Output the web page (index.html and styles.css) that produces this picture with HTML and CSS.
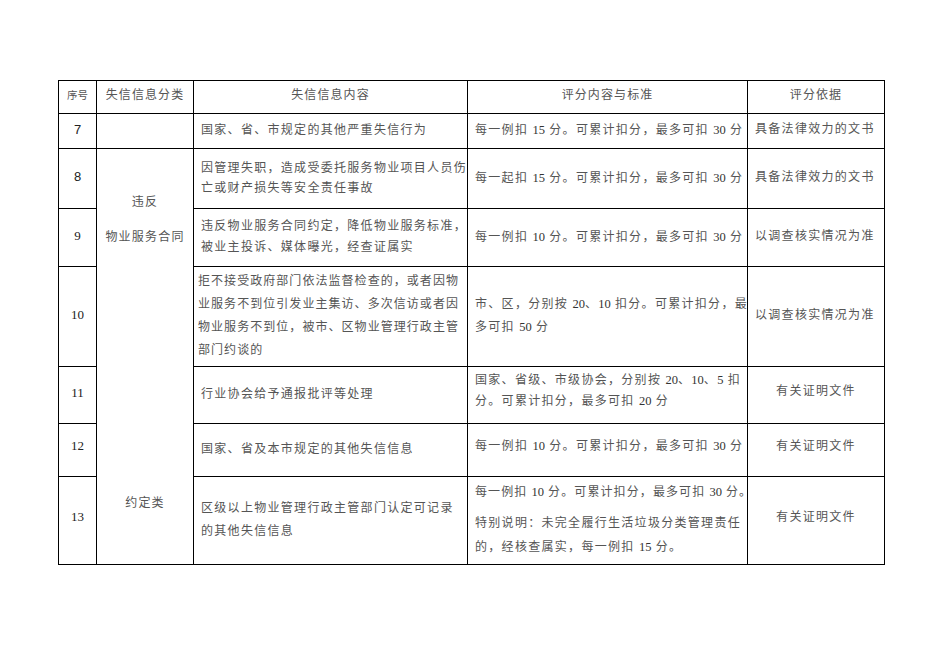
FILE: index.html
```html
<!DOCTYPE html>
<html lang="zh">
<head>
<meta charset="utf-8">
<link rel="stylesheet" href="styles.css">
</head>
<body>
<div class="page">
<table class="grid">
  <colgroup>
    <col class="c0"><col class="c1"><col class="c2"><col class="c3"><col class="c4">
  </colgroup>
  <tr class="h-head">
    <th class="small">序号</th>
    <th>失信信息分类</th>
    <th>失信信息内容</th>
    <th>评分内容与标准</th>
    <th>评分依据</th>
  </tr>
  <tr class="h7">
    <td class="num sans">7</td>
    <td></td>
    <td class="txt">国家、省、市规定的其他严重失信行为</td>
    <td class="txt">每一例扣 <span class="d">15</span> 分。可累计扣分，最多可扣 <span class="d">30</span> 分</td>
    <td class="basis">具备法律效力的文书</td>
  </tr>
  <tr class="h8">
    <td class="num sans">8</td>
    <td class="cat" rowspan="6">
      <div class="cat-a">违反</div>
      <div class="cat-b">物业服务合同</div>
      <div class="cat-c">约定类</div>
    </td>
    <td class="txt lh20">因管理失职，造成受委托服务物业项目人员伤<br>亡或财产损失等安全责任事故</td>
    <td class="txt">每一起扣 <span class="d">15</span> 分。可累计扣分，最多可扣 <span class="d">30</span> 分</td>
    <td class="basis">具备法律效力的文书</td>
  </tr>
  <tr class="h9">
    <td class="num">9</td>
    <td class="txt lh21">违反物业服务合同约定，降低物业服务标准，<br>被业主投诉、媒体曝光，经查证属实</td>
    <td class="txt">每一例扣 <span class="d">10</span> 分。可累计扣分，最多可扣 <span class="d">30</span> 分</td>
    <td class="basis">以调查核实情况为准</td>
  </tr>
  <tr class="h10">
    <td class="num">10</td>
    <td class="txt lh23 tight">拒不接受政府部门依法监督检查的，或者因物<br>业服务不到位引发业主集访、多次信访或者因<br>物业服务不到位，被市、区物业管理行政主管<br>部门约谈的</td>
    <td class="txt lh23">市、区，分别按 <span class="d">20</span>、<span class="d">10</span> 扣分。可累计扣分，最<br>多可扣 <span class="d">50</span> 分</td>
    <td class="basis">以调查核实情况为准</td>
  </tr>
  <tr class="h11">
    <td class="num">11</td>
    <td class="txt">行业协会给予通报批评等处理</td>
    <td class="txt lh21 up">国家、省级、市级协会，分别按 <span class="d">20</span>、<span class="d">10</span>、<span class="d">5</span> 扣<br>分。可累计扣分，最多可扣 <span class="d">20</span> 分</td>
    <td class="basis ctr up">有关证明文件</td>
  </tr>
  <tr class="h12">
    <td class="num up">12</td>
    <td class="txt">国家、省及本市规定的其他失信信息</td>
    <td class="txt up">每一例扣 <span class="d">10</span> 分。可累计扣分，最多可扣 <span class="d">30</span> 分</td>
    <td class="basis ctr up">有关证明文件</td>
  </tr>
  <tr class="h13">
    <td class="num up">13</td>
    <td class="txt lh23">区级以上物业管理行政主管部门认定可记录<br>的其他失信信息</td>
    <td class="txt lh24">
      <p class="para first">每一例扣 <span class="d">10</span> 分。可累计扣分，最多可扣 <span class="d">30</span> 分。</p>
      <p class="para gap">特别说明：未完全履行生活垃圾分类管理责任<br>的，经核查属实，每一例扣 <span class="d">15</span> 分。</p>
    </td>
    <td class="basis ctr up">有关证明文件</td>
  </tr>
</table>
</div>
</body>
</html>
```
FILE: styles.css
```css
html, body {
  margin: 0;
  padding: 0;
  background: #ffffff;
}
.page {
  padding: 80px 0 0 58px;
  font-family: "Liberation Serif", "Noto Sans CJK SC", serif;
  color: #555;
}
.grid {
  border-collapse: collapse;
  table-layout: fixed;
  width: 826px;
}
.c0 { width: 38px; }
.c1 { width: 97px; }
.c2 { width: 274px; }
.c3 { width: 280px; }
.c4 { width: 137px; }
.grid th, .grid td {
  border: 1px solid #000;
  padding: 0;
  font-size: 12px;
  letter-spacing: 1.3px;
  white-space: nowrap;
  overflow: visible;
}
.grid th {
  font-weight: normal;
  text-align: center;
  vertical-align: middle;
  padding-bottom: 6px;
  letter-spacing: 1.1px;
}
.grid th.small {
  font-size: 10.5px;
  letter-spacing: 0;
}
.h-head { height: 33px; }
.h7 { height: 35px; }
.h8 { height: 60px; }
.h9 { height: 58px; }
.h10 { height: 100px; }
.h11 { height: 57px; }
.h12 { height: 53px; }
.h13 { height: 88px; }

.grid td.num {
  text-align: center;
  vertical-align: middle;
  font-size: 13px;
  letter-spacing: 0;
  color: #222;
  padding-bottom: 4px;
}
.grid td.num.sans {
  font-family: "Liberation Sans", sans-serif;
}
.grid td.txt {
  text-align: left;
  vertical-align: middle;
  padding: 0 0 2px 7px;
  line-height: 18px;
}
.grid td.txt.tight {
  padding-left: 4px;
  letter-spacing: 1.05px;
}
.grid td.basis {
  text-align: left;
  vertical-align: middle;
  padding: 0 0 4px 7px;
  line-height: 18px;
}
.grid td.basis.ctr {
  text-align: center;
  padding-left: 0;
}
.grid td.up {
  padding-bottom: 8px;
}
.lh20 { line-height: 20px !important; }
.lh21 { line-height: 21px !important; }
.lh23 { line-height: 23px !important; }
.lh24 { line-height: 24px !important; }

.d {
  color: #333;
  letter-spacing: 0;
  font-size: 12.5px;
}

.grid td.cat {
  vertical-align: top;
  text-align: center;
  padding: 43px 0 0 0;
  line-height: 20px;
  letter-spacing: 1.2px;
}
.cat-b { margin-top: 15px; }
.cat-c { margin-top: 246px; }

.para {
  margin: 0;
}
.para.first {
  letter-spacing: 1.1px;
}
.para.gap {
  margin-top: 7px;
}
```
